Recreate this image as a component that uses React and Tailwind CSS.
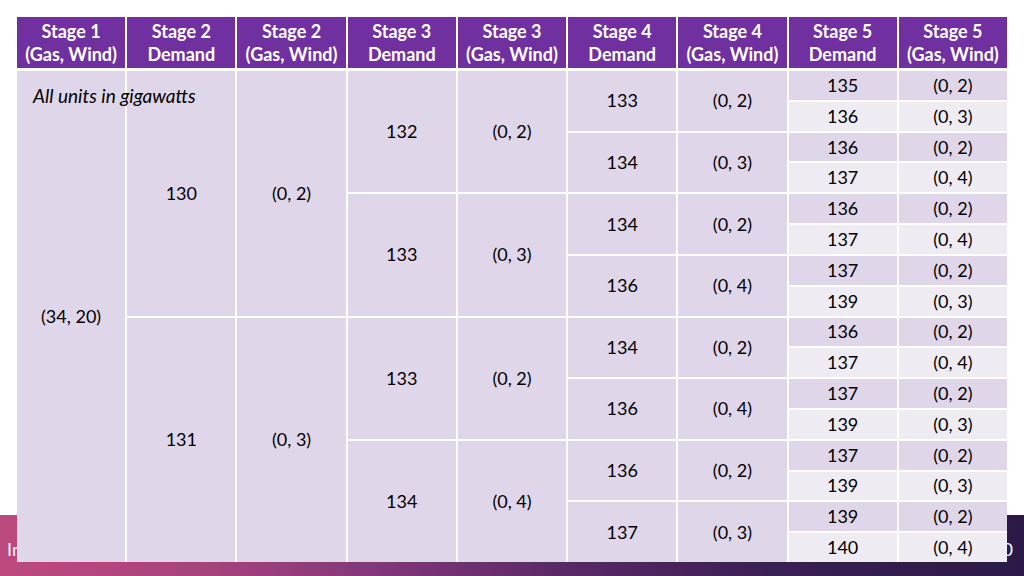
import React from "react";

const headers = [
  ["Stage 1", "(Gas, Wind)"],
  ["Stage 2", "Demand"],
  ["Stage 2", "(Gas, Wind)"],
  ["Stage 3", "Demand"],
  ["Stage 3", "(Gas, Wind)"],
  ["Stage 4", "Demand"],
  ["Stage 4", "(Gas, Wind)"],
  ["Stage 5", "Demand"],
  ["Stage 5", "(Gas, Wind)"],
];

const cols = [
  { span: 16, items: ["(34, 20)"] },
  { span: 8, items: ["130", "131"] },
  { span: 8, items: ["(0, 2)", "(0, 3)"] },
  { span: 4, items: ["132", "133", "133", "134"] },
  { span: 4, items: ["(0, 2)", "(0, 3)", "(0, 2)", "(0, 4)"] },
  { span: 2, items: ["133", "134", "134", "136", "134", "136", "136", "137"] },
  { span: 2, items: ["(0, 2)", "(0, 3)", "(0, 2)", "(0, 4)", "(0, 2)", "(0, 4)", "(0, 2)", "(0, 3)"] },
  { span: 1, items: ["135", "136", "136", "137", "136", "137", "137", "139", "136", "137", "137", "139", "137", "139", "139", "140"] },
  { span: 1, items: ["(0, 2)", "(0, 3)", "(0, 2)", "(0, 4)", "(0, 2)", "(0, 4)", "(0, 2)", "(0, 3)", "(0, 2)", "(0, 4)", "(0, 2)", "(0, 3)", "(0, 2)", "(0, 3)", "(0, 2)", "(0, 4)"] },
];

const spanClass = {
  16: "row-span-16",
  8: "row-span-8",
  4: "row-span-4",
  2: "row-span-2",
  1: "row-span-1",
};
const colClass = [
  "col-start-1",
  "col-start-2",
  "col-start-3",
  "col-start-4",
  "col-start-5",
  "col-start-6",
  "col-start-7",
  "col-start-8",
  "col-start-9",
];

export default function App() {
  const cells = [];
  cols.forEach((c, ci) => {
    c.items.forEach((t, i) => {
      const light = c.span === 1 && i % 2 === 1;
      cells.push(
        <div
          key={ci + "-" + i}
          className={`${colClass[ci]} ${spanClass[c.span]} flex items-center justify-center ${
            light ? "bg-[#efebf3]" : "bg-[#e0d6e9]"
          }`}
          style={{ gridRowStart: i * c.span + 1 }}
        >
          {t}
        </div>
      );
    });
  });

  return (
    <div
      className="relative w-[1024px] h-[576px] overflow-hidden bg-white"
      style={{ fontFamily: "Lato, 'Open Sans', sans-serif" }}
    >
      {/* bottom band */}
      <div className="absolute left-0 right-0 bottom-0 h-[61px] bg-[linear-gradient(90deg,#bd4a7f_0%,#a8427c_20%,#87387a_35%,#5a2866_55%,#3a1f55_75%,#2b1a47_100%)]">
        <span className="absolute left-[7px] top-[21px] text-[18px] text-white">In</span>
        <span className="absolute left-[992px] top-[21px] text-[18px] text-white">10</span>
      </div>

      <div className="relative ml-[17px] mt-[17px] w-[990px] bg-white">
        <div className="grid grid-cols-9 gap-x-[2px] h-[51px]">
          {headers.map((h, i) => (
            <div
              key={i}
              className="bg-[#7030a0] text-white font-bold text-[18px] leading-[23px] flex flex-col items-center justify-center"
            >
              <span>{h[0]}</span>
              <span>{h[1]}</span>
            </div>
          ))}
        </div>
        <div className="grid grid-cols-9 grid-rows-[repeat(16,minmax(0,1fr))] gap-[2px] h-[494px] pt-[3px] text-[18px] text-black">
          {cells}
        </div>
        <div className="absolute left-[16px] top-[65px] italic text-[19px] text-black">
          All units in gigawatts
        </div>
      </div>
    </div>
  );
}
